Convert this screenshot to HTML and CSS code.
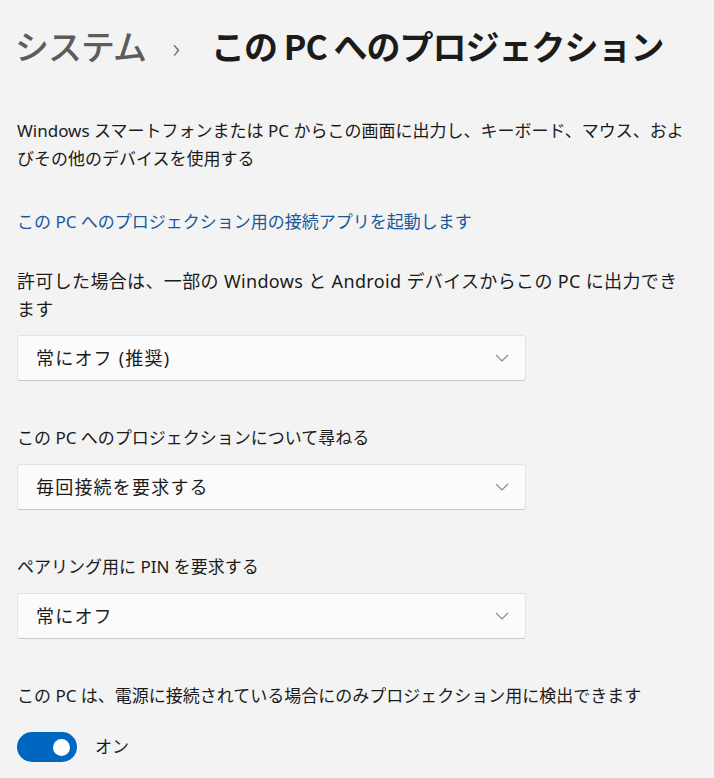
FILE: index.html
```html
<!DOCTYPE html>
<html lang="ja">
<head>
<meta charset="utf-8">
<link rel="stylesheet" href="styles.css">
</head>
<body>
<main class="page">
  <h1 class="title"><span class="crumb">システム</span><span class="sep">›</span><span class="current">この PC へのプロジェクション</span></h1>

  <p class="intro">Windows スマートフォンまたは PC からこの画面に出力し、キーボード、マウス、およびその他のデバイスを使用する</p>

  <a class="link" href="#">この PC へのプロジェクション用の接続アプリを起動します</a>

  <section class="setting first">
    <p class="label wide">許可した場合は、一部の Windows と Android デバイスからこの PC に出力できます</p>
    <div class="select"><span class="value">常にオフ (推奨)</span><svg class="chev" width="14" height="8" viewBox="0 0 14 8"><path d="M1 1l6 6 6-6" fill="none" stroke="#8a8a8a" stroke-width="1.2"/></svg></div>
  </section>

  <section class="setting">
    <p class="label">この PC へのプロジェクションについて尋ねる</p>
    <div class="select"><span class="value">毎回接続を要求する</span><svg class="chev" width="14" height="8" viewBox="0 0 14 8"><path d="M1 1l6 6 6-6" fill="none" stroke="#8a8a8a" stroke-width="1.2"/></svg></div>
  </section>

  <section class="setting">
    <p class="label">ペアリング用に PIN を要求する</p>
    <div class="select"><span class="value">常にオフ</span><svg class="chev" width="14" height="8" viewBox="0 0 14 8"><path d="M1 1l6 6 6-6" fill="none" stroke="#8a8a8a" stroke-width="1.2"/></svg></div>
  </section>

  <section class="setting">
    <p class="label">この PC は、電源に接続されている場合にのみプロジェクション用に検出できます</p>
    <div class="toggle-row"><span class="toggle"><span class="knob"></span></span><span class="toggle-text">オン</span></div>
  </section>
</main>
</body>
</html>
```

FILE: styles.css
```css
html, body {
  margin: 0;
  padding: 0;
  background: #f3f3f3;
}
body {
  font-family: "Noto Sans", "Noto Sans CJK JP", sans-serif;
  color: #1b1b1b;
  font-size: 17px;
  line-height: 28px;
}
.page {
  padding: 22px 30px 0 17px;
  display: flex;
  flex-direction: column;
  align-items: flex-start;
}
.title {
  margin: 0 0 0 -2px;
  font-family: "Noto Sans CJK JP", sans-serif;
  font-size: 34px;
  line-height: 48px;
  font-weight: 700;
  display: flex;
  align-items: center;
  letter-spacing: -1px;
}
.crumb {
  color: #5c5c5c;
  font-weight: 500;
}
.sep {
  color: #6a6a6a;
  font-weight: 300;
  font-size: 28px;
  margin: 0 32px 0 26px;
}
.current {
  color: #1b1b1b;
}
.intro {
  margin: 47px 0 0 0;
}
.link {
  margin-top: 35px;
  color: #19599a;
  text-decoration: none;
}
.setting {
  margin-top: 43px;
  width: 100%;
}
.setting.first {
  margin-top: 31px;
}
.label {
  margin: 0 0 12px 0;
}
.label.wide {
  font-size: 18px;
  letter-spacing: 0.35px;
}
.select {
  height: 44px;
  background: #fbfbfb;
  border: 1px solid #e3e3e3;
  border-bottom-color: #c8c8c8;
  border-radius: 3px;
  display: flex;
  align-items: center;
  justify-content: space-between;
  padding: 0 16px 0 18px;
  width: 473px;
}
.value {
  font-size: 18px;
  letter-spacing: 1.2px;
}
.toggle-row {
  display: flex;
  align-items: center;
  margin-top: 22px;
}
.toggle {
  width: 60px;
  height: 30px;
  border-radius: 15px;
  background: #0067c0;
  display: flex;
  align-items: center;
  justify-content: flex-end;
  box-sizing: border-box;
  padding-right: 7px;
}
.knob {
  width: 17px;
  height: 17px;
  border-radius: 50%;
  background: #ffffff;
}
.toggle-text {
  margin-left: 18px;
}
```
